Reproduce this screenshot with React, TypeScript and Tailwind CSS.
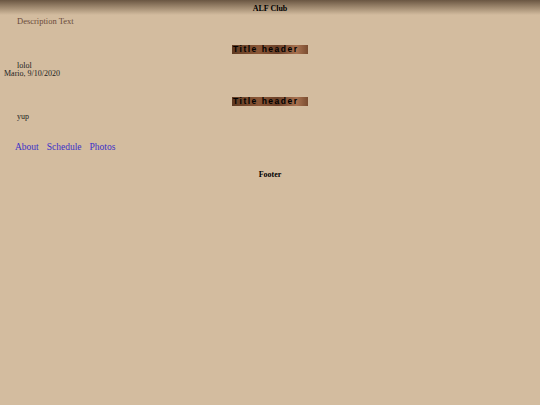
export default function App() {
  const serif = { fontFamily: '"Liberation Serif", "Times New Roman", serif' }

  const TitleHeader = () => (
    <div className="flex justify-center">
      <div
        className="h-[9px] w-[76px] bg-[linear-gradient(90deg,#5e3a22_0%,#8a5636_35%,#6b4028_60%,#a87250_85%,#7a4c30_100%)] pl-[1px] text-[8.5px] font-bold leading-[9px] tracking-[1.5px] text-black"
        style={{ fontFamily: '"Liberation Sans", Arial, sans-serif' }}
      >
        Title header
      </div>
    </div>
  )

  return (
    <div className="min-h-[405px] w-full bg-[#d3bc9f]" style={serif}>
      <div className="h-[15px] bg-[linear-gradient(180deg,#6a5642_0%,#a08a70_50%,#d3bc9f_100%)] pt-[4px] text-center text-[8px] font-bold leading-[10px] text-black">
        ALF Club
      </div>
      <div className="pl-[17px] text-[8.5px] leading-[12px] text-[#6a4a3a]">Description Text</div>

      <div className="mt-[18px]">
        <TitleHeader />
      </div>
      <div className="mt-[8px] pl-[17px] text-[8px] leading-[7px] text-[#222]">lolol</div>
      <div className="pl-[4px] text-[8px] leading-[9px] text-[#222]">Mario, 9/10/2020</div>

      <div className="mt-[19px]">
        <TitleHeader />
      </div>
      <div className="mt-[6px] pl-[17px] text-[8px] leading-[10px] text-[#222]">yup</div>

      <div className="mt-[19px] flex gap-[8px] pl-[15px] text-[9.5px] leading-[12px] text-[#3a30c8]">
        <a>About</a>
        <a>Schedule</a>
        <a>Photos</a>
      </div>

      <div className="mt-[17px] text-center text-[8px] font-bold leading-[10px] text-black">Footer</div>
    </div>
  )
}
